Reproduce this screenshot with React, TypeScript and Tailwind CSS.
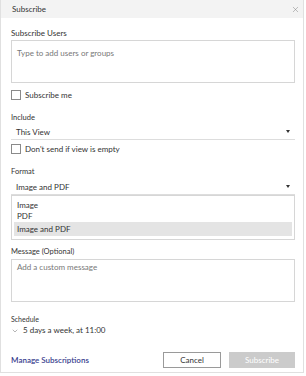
import { ChevronDown, X } from 'lucide-react'

function Checkbox({ label }: { label: string }) {
  return (
    <label className="flex items-center gap-[4px] h-[12px] text-[8px] text-[#333] leading-[12px]">
      <span className="w-[10px] h-[10px] border border-[#8a8a8a] bg-white" />
      {label}
    </label>
  )
}

function Select({ value }: { value: string }) {
  return (
    <div className="flex items-center justify-between h-[16px] pl-[5px] pr-[5px] border-b border-[#ddd] text-[8px] text-[#333]">
      <span>{value}</span>
      <span className="w-0 h-0 border-l-[2.5px] border-r-[2.5px] border-t-[3px] border-l-transparent border-r-transparent border-t-[#333]" />
    </div>
  )
}

export default function App() {
  return (
    <div className="w-[306px] h-[376px] bg-white" style={{ fontFamily: 'Lato, "Liberation Sans", sans-serif' }}>
      <div className="w-[304px] h-[373px] border-r border-b border-l border-[#e0e0e0] flex flex-col">
        {/* Title */}
        <div className="h-[18px] bg-[#f3f3f3] flex items-center justify-between pl-[11px] pr-[3px]">
          <span className="text-[8px] text-[#333]">Subscribe</span>
          <X size={9} strokeWidth={1.2} className="text-[#777]" />
        </div>

        <div className="pl-[10px] pr-[8px] flex flex-col">
          <div className="mt-[8px] text-[8px] text-[#333] leading-[14px]">Subscribe Users</div>
          <div className="h-[43px] border border-[#d6d6d6] px-[5px] pt-[6px] text-[8px] text-[#777] leading-[12px]">
            Type to add users or groups
          </div>
          <div className="mt-[6px]">
            <Checkbox label="Subscribe me" />
          </div>

          <div className="mt-[11px] text-[7.5px] text-[#333] leading-[12px]">Include</div>
          <Select value="This View" />
          <div className="mt-[3px]">
            <Checkbox label="Don't send if view is empty" />
          </div>

          <div className="mt-[11px] text-[7.5px] text-[#333] leading-[12px]">Format</div>
          <div className="mt-[1px]">
            <Select value="Image and PDF" />
          </div>
          <div className="h-[45px] border border-[#d6d6d6] pt-[3px] px-[2px] text-[8px] text-[#333]">
            <div className="pl-[3px] h-[12px] leading-[12px]">Image</div>
            <div className="pl-[3px] h-[11px] leading-[11px]">PDF</div>
            <div className="pl-[3px] bg-[#e4e4e4] h-[14px] leading-[14px]">Image and PDF</div>
          </div>

          <div className="mt-[6px] text-[7.5px] text-[#333] leading-[12px]">Message (Optional)</div>
          <div className="mt-[1px] h-[43px] border border-[#d6d6d6] px-[5px] pt-[1px] text-[8px] text-[#777] leading-[12px]">
            Add a custom message
          </div>

          <div className="mt-[12px] text-[7px] text-[#333] leading-[11px]">Schedule</div>
          <div className="flex items-center gap-[4px] text-[8px] text-[#333] leading-[11px]">
            <ChevronDown size={8} strokeWidth={1.3} className="text-[#555]" />
            <span>5 days a week, at 11:00</span>
          </div>

          <div className="mt-[16px] flex items-center justify-between">
            <span className="text-[8px] font-semibold text-[#3b3f8f]">Manage Subscriptions</span>
            <div className="flex gap-[8px]">
              <button className="w-[58px] h-[16px] border border-[#9a9a9a] bg-white text-[8px] text-[#333] leading-none">
                Cancel
              </button>
              <button className="w-[66px] h-[16px] bg-[#cbcbcb] text-[8px] text-white leading-none">
                Subscribe
              </button>
            </div>
          </div>
        </div>
      </div>
    </div>
  )
}
